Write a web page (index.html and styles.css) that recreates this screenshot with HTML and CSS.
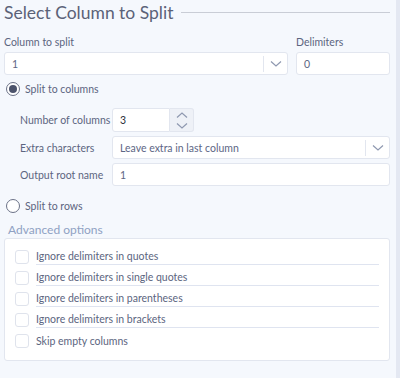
FILE: index.html
```html
<!DOCTYPE html>
<html lang="en">
<head>
    <meta charset="UTF-8">
    <title>Select Column to Split</title>
    <link rel="stylesheet" href="styles.css">
</head>
<body>
    <div class="panel">
        <!-- Cabeçalho -->
        <div class="heading">
            <h1>Select Column to Split</h1>
            <span class="rule"></span>
        </div>

        <div class="top-row">
            <div class="field grow">
                <label>Column to split</label>
                <div class="select">
                    <span class="value">1</span>
                    <span class="arrow"><svg width="12" height="8" viewBox="0 0 12 8"><path d="M1 1.5 L6 6 L11 1.5" fill="none" stroke="#8e98b0" stroke-width="1.2"/></svg></span>
                </div>
            </div>
            <div class="field delim">
                <label>Delimiters</label>
                <div class="input"><span class="value">0</span></div>
            </div>
        </div>

        <div class="radio checked"><span class="dot"></span>Split to columns</div>

        <div class="sub-form">
            <span class="sub-label">Number of columns</span>
            <div class="number">
                <div class="input short"><span class="value dark">3</span></div>
                <div class="spin">
                    <svg width="12" height="8" viewBox="0 0 12 8"><path d="M1 6.5 L6 2 L11 6.5" fill="none" stroke="#8e98b0" stroke-width="1.2"/></svg>
                    <svg width="12" height="8" viewBox="0 0 12 8"><path d="M1 1.5 L6 6 L11 1.5" fill="none" stroke="#8e98b0" stroke-width="1.2"/></svg>
                </div>
            </div>

            <span class="sub-label">Extra characters</span>
            <div class="select">
                <span class="value">Leave extra in last column</span>
                <span class="arrow"><svg width="12" height="8" viewBox="0 0 12 8"><path d="M1 1.5 L6 6 L11 1.5" fill="none" stroke="#8e98b0" stroke-width="1.2"/></svg></span>
            </div>

            <span class="sub-label">Output root name</span>
            <div class="input"><span class="value">1</span></div>
        </div>

        <div class="radio"><span class="dot"></span>Split to rows</div>

        <div class="advanced-title">Advanced options</div>
        <div class="advanced">
            <div class="check lined"><span class="box"></span><span class="text">Ignore delimiters in quotes</span></div>
            <div class="check lined"><span class="box"></span><span class="text">Ignore delimiters in single quotes</span></div>
            <div class="check lined"><span class="box"></span><span class="text">Ignore delimiters in parentheses</span></div>
            <div class="check lined"><span class="box"></span><span class="text">Ignore delimiters in brackets</span></div>
            <div class="check"><span class="box"></span><span class="text">Skip empty columns</span></div>
        </div>
    </div>
</body>
</html>
```

FILE: styles.css
```css
/* Estilização geral */
body {
    margin: 0;
    background: #f5f8fd;
    font-family: Lato, "Open Sans", sans-serif;
    color: #5c6580;
}

.panel {
    width: 400px;
    height: 378px;
    box-sizing: border-box;
    border-right: 4px solid #e4e8f2;
    padding: 0 6px 0 4px;
}

/* Título */
.heading {
    display: flex;
    align-items: center;
    gap: 8px;
    height: 24px;
}

h1 {
    margin: 0;
    font-size: 17.5px;
    font-weight: normal;
    color: #5b6278;
    white-space: nowrap;
}

.rule {
    flex: 1;
    height: 1px;
    background: #c9cdd6;
}

/* Campos */
.top-row {
    display: flex;
    gap: 8px;
    margin-top: 10px;
}

.field label {
    display: block;
    font-size: 10.5px;
    line-height: 16px;
    margin-bottom: 2px;
}

.grow {
    flex: 1;
}

.delim {
    width: 94px;
}

.input,
.select {
    display: flex;
    align-items: center;
    box-sizing: border-box;
    height: 23px;
    background: #fff;
    border: 1px solid #e2e6ef;
    border-radius: 3px;
    font-size: 10.5px;
}

.value {
    flex: 1;
    padding-left: 7px;
    color: #5d6685;
    white-space: nowrap;
}

.value.dark {
    color: #2b2f3a;
}

.arrow {
    display: flex;
    align-items: center;
    justify-content: center;
    width: 23px;
    height: 16px;
    border-left: 1px solid #e2e6ef;
}

/* Botões de rádio */
.radio {
    display: flex;
    align-items: center;
    gap: 5px;
    font-size: 10.5px;
    height: 16px;
    margin: 6px 0 0 2px;
}

.dot {
    width: 12px;
    height: 12px;
    border: 1.5px solid #6b7287;
    border-radius: 50%;
    background: #fff;
    display: flex;
    align-items: center;
    justify-content: center;
}

.radio.checked .dot::after {
    content: "";
    width: 8px;
    height: 8px;
    border-radius: 50%;
    background: #4c536b;
}

/* Sub formulário */
.sub-form {
    display: grid;
    grid-template-columns: 92px 1fr;
    row-gap: 4px;
    align-items: center;
    padding-left: 16px;
    margin-top: 11px;
    margin-bottom: 12px;
}

.sub-label {
    font-size: 10.5px;
    white-space: nowrap;
}

.number {
    display: flex;
    align-items: stretch;
    height: 24px;
}

.input.short {
    width: 58px;
    height: auto;
    border-radius: 3px 0 0 3px;
}

.spin {
    width: 23px;
    background: #eef1f7;
    border: 1px solid #e2e6ef;
    border-left: none;
    border-radius: 0 3px 3px 0;
    display: flex;
    flex-direction: column;
    align-items: center;
    justify-content: space-around;
}

/* Opções avançadas */
.advanced-title {
    font-size: 12px;
    color: #8fa1c3;
    margin: 8px 0 0 4px;
    line-height: 16px;
}

.advanced {
    background: #fff;
    border: 1px solid #e2e6ef;
    border-radius: 3px;
    height: 123px;
    box-sizing: border-box;
    padding: 7px 10px 0 10px;
}

.check {
    display: flex;
    align-items: center;
    gap: 7px;
    height: 21px;
    font-size: 10.5px;
}

.box {
    width: 12px;
    height: 12px;
    border: 1px solid #dfe3ec;
    border-radius: 3px;
    flex-shrink: 0;
}

.text {
    flex: 1;
    line-height: 16px;
}

.lined .text {
    border-bottom: 1px solid #dfe4f0;
}
```
